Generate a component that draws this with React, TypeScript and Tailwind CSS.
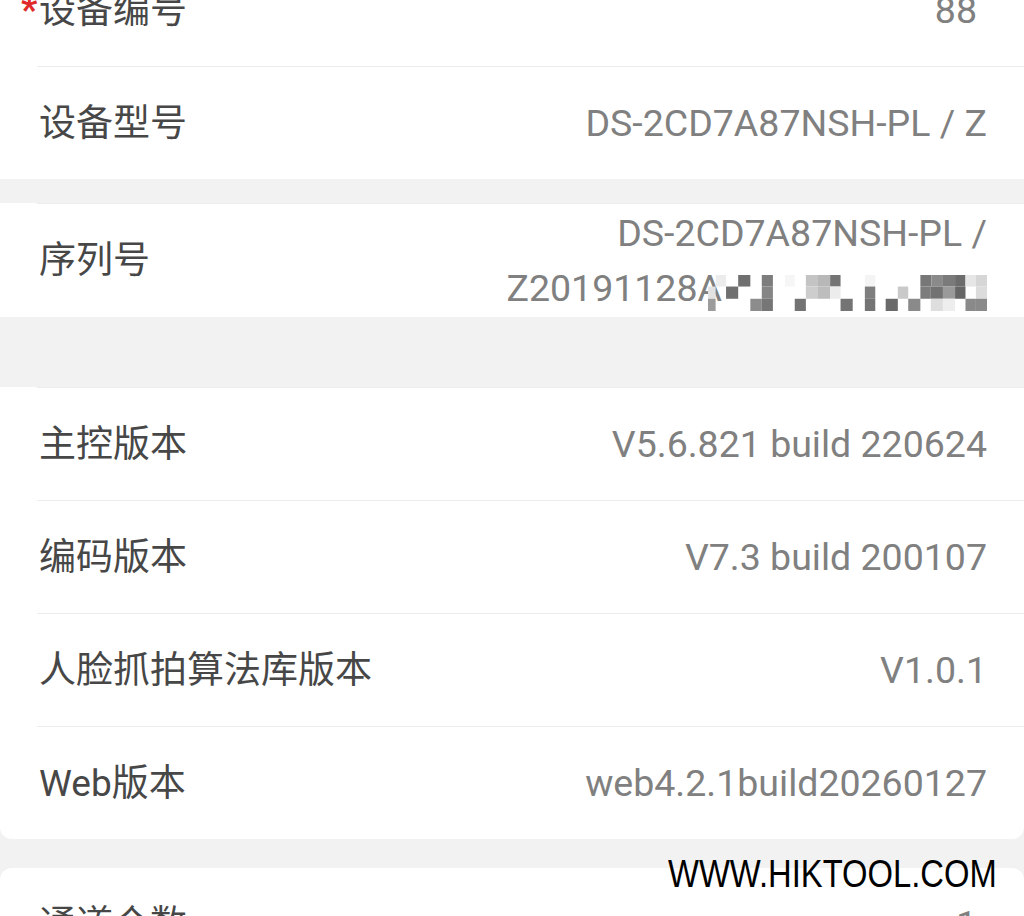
import React from "react";

const labelFont = { fontFamily: '"Roboto", "Noto Sans CJK SC", sans-serif' };

type Cell = [number, number, number, number, string];

// rough mosaic over the hidden part of the serial number
const mosaic: Cell[] = [
  [690, 272, 30, 33, "#ececec"],
  [755, 272, 35, 33, "#6f6f6f"],
  [823, 272, 32, 33, "#7d7d7d"],
  [890, 272, 28, 33, "#f6f6f6"],
  [950, 272, 35, 33, "#c4c4c4"],
  [985, 272, 35, 33, "#b8b8b8"],
  [1020, 272, 30, 33, "#747474"],
  [1120, 272, 30, 33, "#f4f4f4"],
  [1280, 272, 32, 33, "#777777"],
  [1312, 272, 33, 33, "#8a8a8a"],
  [1345, 272, 35, 33, "#7a7a7a"],
  [1380, 272, 30, 33, "#6c6c6c"],
  [1410, 272, 30, 33, "#e6e6e6"],
  [1440, 272, 32, 33, "#d6d6d6"],
  [668, 305, 22, 35, "#e2e2e2"],
  [720, 305, 35, 35, "#707070"],
  [823, 305, 32, 35, "#858585"],
  [950, 305, 35, 35, "#cdcdcd"],
  [985, 305, 35, 35, "#bdbdbd"],
  [1020, 305, 30, 35, "#ececec"],
  [1120, 305, 30, 35, "#7e7e7e"],
  [1215, 305, 30, 35, "#c9c9c9"],
  [1280, 305, 30, 35, "#7c7c7c"],
  [1310, 305, 35, 35, "#727272"],
  [1345, 305, 35, 35, "#9a9a9a"],
  [1380, 305, 30, 35, "#666666"],
  [1440, 305, 32, 35, "#dcdcdc"],
  [668, 340, 22, 35, "#9c9c9c"],
  [790, 340, 33, 35, "#8c8c8c"],
  [823, 340, 32, 35, "#767676"],
  [918, 340, 32, 35, "#737373"],
  [1050, 340, 35, 35, "#747474"],
  [1120, 340, 30, 35, "#747474"],
  [1180, 340, 35, 35, "#6a6a6a"],
  [1245, 340, 35, 35, "#8a8a8a"],
  [1310, 340, 35, 35, "#dedede"],
  [1345, 340, 35, 35, "#eeeeee"],
  [1410, 340, 30, 35, "#8a8a8a"],
  [1440, 340, 32, 35, "#8a8a8a"],
];

const Divider: React.FC = () => (
  <div className="ml-[37px] h-px bg-[#ececec]" />
);

const Row: React.FC<{
  label: string;
  value: React.ReactNode;
  required?: boolean;
  tall?: boolean;
  inputPad?: boolean;
}> = ({ label, value, required, tall, inputPad }) => (
  <div
    className={`flex items-center justify-between pl-[39px] pr-[37px] ${
      tall ? "h-[113px]" : "h-[112px]"
    }`}
  >
    <span className="relative shrink-0 text-[37px] leading-none text-[#474747]">
      {required && (
        <span className="absolute -left-[18px] top-[0px] text-[36px] font-bold leading-none text-[#e02a2a]">
          *
        </span>
      )}
      {label}
    </span>
    <span
      className={`text-right text-[37.5px] leading-[55px] text-[#808080] ${
        inputPad ? "pr-[10px]" : ""
      }`}
    >
      {value}
    </span>
  </div>
);

const Serial: React.FC = () => (
  <span className="inline-block max-w-[500px]">
    DS-2CD7A87NSH-PL /{" "}
    <span className="whitespace-nowrap">
      Z20191128A
      <svg
        width="279"
        height="36"
        viewBox="668 272 804 103"
        preserveAspectRatio="none"
        className="-ml-[14px] inline-block align-[-10px]"
      >
        {mosaic.map(([x, y, w, h, c], i) => (
          <rect key={i} x={x} y={y} width={w} height={h} fill={c} />
        ))}
      </svg>
    </span>
  </span>
);

const App: React.FC = () => {
  return (
    <div
      className="relative h-[916px] w-[1024px] overflow-hidden bg-[#f2f2f2]"
      style={labelFont}
    >
      <div className="-mt-[46px] flex flex-col">
        <div className="bg-white">
          <Row label="设备编号" value="88" required inputPad />
          <Divider />
          <Row label="设备型号" value="DS-2CD7A87NSH-PL / Z" />
        </div>

        <div className="h-[24px]" />
        <div className="bg-white">
          <Divider />
          <Row label="序列号" value={<Serial />} tall />
        </div>

        <div className="h-[70px]" />
        <div className="rounded-b-[12px] bg-white">
          <Divider />
          <Row label="主控版本" value="V5.6.821 build 220624" />
          <Divider />
          <Row label="编码版本" value="V7.3 build 200107" />
          <Divider />
          <Row label="人脸抓拍算法库版本" value="V1.0.1" />
          <Divider />
          <Row label="Web版本" value="web4.2.1build20260127" />
        </div>

        <div className="h-[29px]" />
        <div className="rounded-t-[12px] bg-white">
          <Row label="通道个数" value="1" inputPad tall />
        </div>
      </div>

      <div
        className="absolute left-[668px] top-[852px] origin-left scale-x-[0.84] whitespace-nowrap text-[39px] leading-[44px] text-black"
        style={{ fontFamily: '"Liberation Sans", Arial, sans-serif' }}
      >
        WWW.HIKTOOL.COM
      </div>
    </div>
  );
};

export default App;
